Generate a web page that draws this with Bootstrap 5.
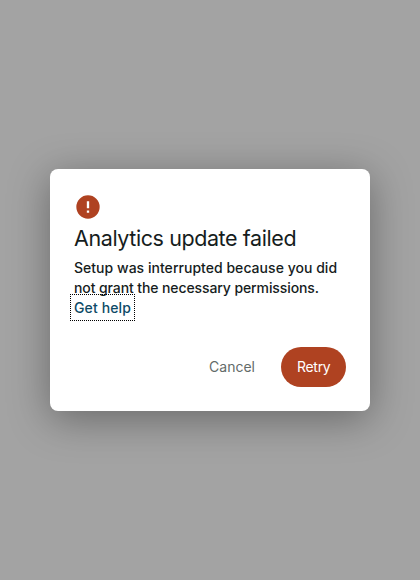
<!DOCTYPE html>
<html lang="en">
<head>
<meta charset="utf-8">
<meta name="viewport" content="width=device-width, initial-scale=1">
<title>Analytics update failed</title>
<link href="https://cdn.jsdelivr.net/npm/bootstrap@5.3.0/dist/css/bootstrap.min.css" rel="stylesheet">
<style>
body { background: #a3a3a3; color: #161d1d; font-family: "Google Sans", Inter, Roboto, sans-serif; }
.dialog-card { width: 320px; height: 242px; border-radius: 8px; box-shadow: 0 8px 40px rgba(0,0,0,.36); }
.alert-icon { width: 28px; height: 28px; fill: #af4221; }
.dialog-title { font-size: 21.5px; line-height: 28px; margin-top: 3px; font-weight: 400; letter-spacing: -.41px; }
.dialog-text { font-size: 14px; line-height: 20px; font-weight: 500; margin-top: 6px; }
.line-one { letter-spacing: .03px; }
.line-two { letter-spacing: -.1px; }
.help-link { color: #0d4a66; letter-spacing: .12px; padding: 1px 0; outline: 1px dotted #000; outline-offset: 3px; }
.dialog-btn { font-size: 14px; line-height: 20px; height: 40px; padding: 0 16px; border: 0; border-radius: 20px; color: #636b69; }
.cancel-btn { margin-right: 10px; }
.retry-btn, .retry-btn:hover { background: #af4221; color: #fff; width: 65px; letter-spacing: -.3px; }
</style>
</head>
<body class="vh-100 d-flex align-items-center justify-content-center overflow-hidden">
<main class="dialog-card bg-white p-4 d-flex flex-column" role="alertdialog" aria-labelledby="title">
  <svg class="alert-icon flex-shrink-0" viewBox="0 0 24 24" aria-hidden="true"><path d="M12 2a10 10 0 1 0 0 20 10 10 0 0 0 0-20zm1 15h-2v-2h2v2zm0-4h-2V7h2v6z"/></svg>
  <h1 class="dialog-title mb-0 text-nowrap" id="title">Analytics update failed</h1>
  <div class="dialog-text text-nowrap">
    <span class="line-one">Setup was interrupted because you did</span><br>
    <span class="line-two">not grant the necessary permissions.</span><br>
    <a href="#" class="help-link text-decoration-none">Get help</a>
  </div>
  <div class="d-flex justify-content-end mt-auto">
    <button type="button" class="btn dialog-btn cancel-btn">Cancel</button>
    <button type="button" class="btn dialog-btn retry-btn">Retry</button>
  </div>
</main>
<script src="https://cdn.jsdelivr.net/npm/bootstrap@5.3.0/dist/js/bootstrap.bundle.min.js"></script>
</body>
</html>
